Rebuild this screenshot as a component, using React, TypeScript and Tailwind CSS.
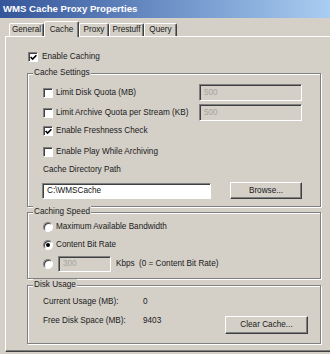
import React from "react";

function Check({ checked }: { checked?: boolean }) {
  return (
    <span className="relative inline-block w-[10px] h-[10px] shrink-0 bg-white border border-t-[#808080] border-l-[#808080] border-b-white border-r-white shadow-[inset_1px_1px_0_#404040]">
      {checked && (
        <svg className="absolute left-[1px] top-[1px]" width="7" height="7" viewBox="0 0 7 7">
          <path d="M0.6 3 L2.6 5 L6.4 1.2" fill="none" stroke="#000" strokeWidth="1.6" />
        </svg>
      )}
    </span>
  );
}

function Radio({ checked }: { checked?: boolean }) {
  return (
    <span className="relative inline-flex items-center justify-center w-[10px] h-[10px] shrink-0 rounded-full bg-white border border-t-[#808080] border-l-[#808080] border-b-white border-r-white shadow-[inset_1px_1px_0_#404040]">
      {checked && <span className="w-[4px] h-[4px] rounded-full bg-black" />}
    </span>
  );
}

function Sunken({ w, h, children, white }: { w: string; h: string; children: React.ReactNode; white?: boolean }) {
  return (
    <div
      className={`${w} ${h} ${white ? "bg-white text-[#111]" : "bg-[#d4d0c8] text-[#a7a39c]"} flex items-center pl-[4px] border border-t-[#808080] border-l-[#808080] border-b-white border-r-white shadow-[inset_1px_1px_0_#404040]`}
    >
      {children}
    </div>
  );
}

function Button({ w, h, children }: { w: string; h: string; children: React.ReactNode }) {
  return (
    <div
      className={`${w} ${h} flex items-center justify-center border border-t-white border-l-white border-b-[#404040] border-r-[#404040] shadow-[inset_-1px_-1px_0_#808080]`}
    >
      {children}
    </div>
  );
}

function Group({ label, children, className }: { label: string; children: React.ReactNode; className?: string }) {
  return (
    <div className={`relative ml-[21px] w-[294px] border border-[#808080] shadow-[inset_1px_1px_0_#fff,1px_1px_0_#fff] ${className ?? ""}`}>
      <span className="absolute left-[5px] top-[-7px] bg-[#d4d0c8] px-[1px] leading-[11px]">{label}</span>
      {children}
    </div>
  );
}

function Tab({ w, label, active }: { w: string; label: string; active?: boolean }) {
  return (
    <div
      className={`${w} ${
        active ? "h-[16px] -mb-px relative z-10 bg-[#d4d0c8]" : "h-[13px]"
      } flex items-center justify-center rounded-t-[2px] border-t border-l border-r border-t-white border-l-white border-r-[#404040] shadow-[inset_-1px_0_0_#808080]`}
    >
      {label}
    </div>
  );
}

export default function App() {
  return (
    <div className="w-[330px] h-[354px] overflow-hidden bg-[#d4d0c8] text-[#1a1a1a] text-[8.2px] leading-[10px] font-['Liberation_Sans',Arial,sans-serif]">
      <div className="h-[18px] flex items-center pl-[3px] bg-gradient-to-r from-[#35559a] to-[#a9cdf2] text-white font-bold text-[9.6px]">
        WMS Cache Proxy Properties
      </div>
      <div className="h-[18px] flex items-end pl-[9px]">
        <Tab w="w-[35px]" label="General" />
        <Tab w="w-[35px]" label="Cache" active />
        <Tab w="w-[30px]" label="Proxy" />
        <Tab w="w-[35px]" label="Prestuff" />
        <Tab w="w-[33px]" label="Query" />
      </div>
      <div className="ml-[5px] h-[316px] border-t border-l border-b border-t-white border-l-white border-b-[#404040] shadow-[inset_0_-1px_0_#808080] pt-[13px]">
        <div className="h-[14px] flex items-center gap-[4px] pl-[22px]">
          <Check checked />
          <span>Enable Caching</span>
        </div>

        <Group label="Cache Settings" className="mt-[9px] pt-[10px] pb-[7px]">
          <div className="h-[17px] flex items-center pl-[15px]">
            <div className="w-[156px] flex items-center gap-[3px]">
              <Check />
              <span>Limit Disk Quota (MB)</span>
            </div>
            <Sunken w="w-[103px]" h="h-[17px]">500</Sunken>
          </div>
          <div className="mt-[3px] h-[17px] flex items-center pl-[15px]">
            <div className="w-[156px] flex items-center gap-[3px]">
              <Check />
              <span>Limit Archive Quota per Stream (KB)</span>
            </div>
            <Sunken w="w-[103px]" h="h-[17px]">500</Sunken>
          </div>
          <div className="mt-[3px] h-[14px] flex items-center gap-[3px] pl-[15px]">
            <Check checked />
            <span>Enable Freshness Check</span>
          </div>
          <div className="mt-[7px] h-[14px] flex items-center gap-[3px] pl-[15px]">
            <Check />
            <span>Enable Play While Archiving</span>
          </div>
          <div className="mt-[5px] h-[12px] flex items-center pl-[15px]">Cache Directory Path</div>
          <div className="mt-[6px] h-[17px] flex items-center pl-[14px] gap-[19px]">
            <Sunken w="w-[169px]" h="h-[16px]" white>
              C:\WMSCache
            </Sunken>
            <Button w="w-[72px]" h="h-[17px]">Browse...</Button>
          </div>
        </Group>

        <Group label="Caching Speed" className="mt-[5px] pt-[7px] pb-[6px]">
          <div className="h-[14px] flex items-center gap-[3px] pl-[15px]">
            <Radio />
            <span>Maximum Available Bandwidth</span>
          </div>
          <div className="mt-[4px] h-[14px] flex items-center gap-[3px] pl-[15px]">
            <Radio checked />
            <span>Content Bit Rate</span>
          </div>
          <div className="mt-[4px] h-[16px] flex items-center pl-[15px]">
            <Radio />
            <div className="ml-[5px]">
              <Sunken w="w-[53px]" h="h-[16px]">300</Sunken>
            </div>
            <span className="ml-[5px] w-[23px]">Kbps</span>
            <span>(0 = Content Bit Rate)</span>
          </div>
        </Group>

        <Group label="Disk Usage" className="mt-[6px] pt-[9px] pb-[9px]">
          <div className="h-[14px] flex items-center pl-[15px]">
            <span className="w-[100px]">Current Usage (MB):</span>
            <span>0</span>
          </div>
          <div className="mt-[5px] h-[20px] flex items-start pl-[15px]">
            <span className="w-[100px] h-[14px] flex items-center">Free Disk Space (MB):</span>
            <span className="w-[82px] h-[14px] flex items-center">9403</span>
            <div className="mt-[2px]">
              <Button w="w-[83px]" h="h-[18px]">Clear Cache...</Button>
            </div>
          </div>
        </Group>
      </div>
    </div>
  );
}
